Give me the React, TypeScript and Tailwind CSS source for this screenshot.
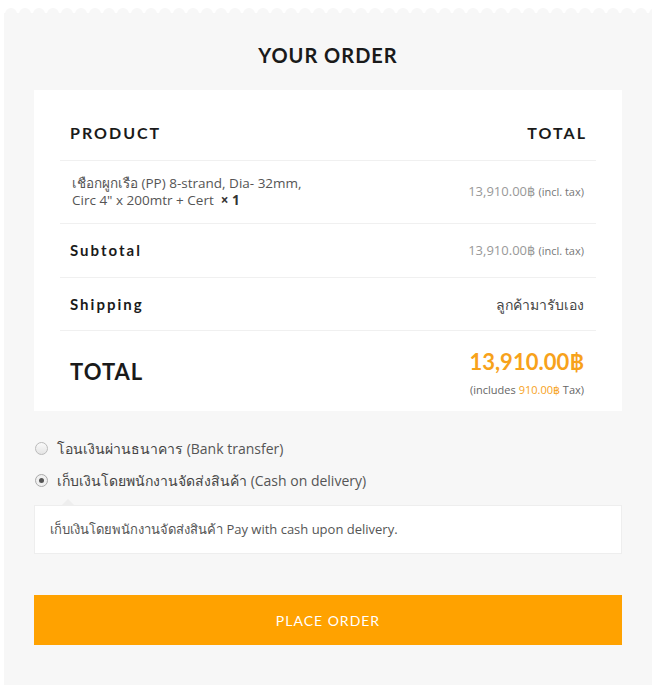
import { FC } from 'react';

const Scallops: FC = () => (
  <svg className="absolute left-0 -top-[5px] w-full h-[6px]" preserveAspectRatio="none">
    <defs>
      <pattern id="scallop" width="14" height="6" patternUnits="userSpaceOnUse">
        <circle cx="7" cy="6" r="6" fill="#f7f7f7" />
      </pattern>
    </defs>
    <rect width="100%" height="6" fill="url(#scallop)" />
  </svg>
);

const App: FC = () => {
  const font = { fontFamily: 'Lato, "Noto Sans", "DejaVu Sans", sans-serif' };
  const body = { fontFamily: '"Open Sans", "Noto Sans", sans-serif' };

  return (
    <div className="bg-white w-[657px] h-[689px] pt-[13px] pl-1 pr-[5px]" style={font}>
      <section className="relative bg-[#f7f7f7] h-[672px] px-[30px]">
        <Scallops />
        <h1 className="pt-[30px] text-center text-[20px] font-bold tracking-[1px] text-[#1a1a1a] leading-[24px]">
          YOUR ORDER
        </h1>

        {/* ORDER TABLE */}
        <article className="bg-white mt-[23px] px-[26px] pt-[15px] pb-[2px]">
          <div className="flex justify-between items-center h-[56px] pl-[10px] pr-[11px] border-b border-[#f0f0f0] text-[16px] font-bold tracking-[2px] text-[#1a1a1a]">
            <span>PRODUCT</span>
            <span className="-mr-[2px]">TOTAL</span>
          </div>
          <div className="flex justify-between items-center h-[63px] pl-[12px] pr-[12px] border-b border-[#f0f0f0]" style={body}>
            <span className="text-[13.5px] leading-[17px] text-[#555]">
              เชือกผูกเรือ (PP) 8-strand, Dia- 32mm,
              <br />
              Circ 4" x 200mtr + Cert&nbsp; <b className="text-[#333]">× 1</b>
            </span>
            <span className="text-[13px] text-[#999]">
              13,910.00฿ <span className="text-[11px] text-[#777]">(incl. tax)</span>
            </span>
          </div>
          <div className="flex justify-between items-center h-[54px] pl-[10px] pr-[12px] border-b border-[#f0f0f0]">
            <span className="text-[15px] font-bold tracking-[2px] text-[#1a1a1a]">Subtotal</span>
            <span className="text-[13px] text-[#999]" style={body}>
              13,910.00฿ <span className="text-[11px] text-[#777]">(incl. tax)</span>
            </span>
          </div>
          <div className="flex justify-between items-center h-[53px] pl-[10px] pr-[12px] border-b border-[#f0f0f0]">
            <span className="text-[15px] font-bold tracking-[2px] text-[#1a1a1a]">Shipping</span>
            <span className="text-[14px] text-[#444]" style={body}>ลูกค้ามารับเอง</span>
          </div>
          <div className="flex justify-between items-center h-[78px] pl-[10px] pr-[12px] pt-[6px]">
            <span className="text-[22px] font-bold tracking-[1px] text-[#1a1a1a] -mt-[4px]">TOTAL</span>
            <div className="text-right">
              <div className="text-[22px] font-bold text-[#f7a21b] leading-[28px]">13,910.00฿</div>
              <div className="text-[11px] text-[#666] mt-[6px]" style={body}>
                (includes <span className="text-[#f7a21b]">910.00฿</span> Tax)
              </div>
            </div>
          </div>
        </article>

        {/* PAYMENT METHODS */}
        <div className="mt-[27px] pl-[1px] text-[14px] text-[#444]" style={body}>
          <label className="flex items-center gap-[9px] h-[20px]">
            <span className="w-[13px] h-[13px] rounded-full border border-[#bbb] bg-[linear-gradient(#fafafa,#e4e4e4)]" />
            <span>
              โอนเงินผ่านธนาคาร <span className="text-[#555]">(Bank transfer)</span>
            </span>
          </label>
          <label className="flex items-center gap-[9px] h-[20px] mt-[12px]">
            <span className="w-[13px] h-[13px] rounded-full border border-[#aaa] bg-[#f0f0f0] flex items-center justify-center">
              <span className="w-[5px] h-[5px] rounded-full bg-[#555]" />
            </span>
            <span>
              เก็บเงินโดยพนักงานจัดส่งสินค้า <span className="text-[#555]">(Cash on delivery)</span>
            </span>
          </label>
        </div>
        <div
          className="relative mt-[15px] bg-white border border-[#eee] h-[49px] flex items-center px-[15px] text-[13px] text-[#555]"
          style={body}
        >
          <span className="absolute -top-[7px] left-[26px] w-0 h-0 border-x-[7px] border-x-transparent border-b-[7px] border-b-[#eee]" />
          เก็บเงินโดยพนักงานจัดส่งสินค้า Pay with cash upon delivery.
        </div>

        <button className="mt-[41px] w-full h-[50px] bg-[#ffa200] text-white text-[14px] tracking-[1px]">
          PLACE ORDER
        </button>
      </section>
    </div>
  );
};

export default App;
